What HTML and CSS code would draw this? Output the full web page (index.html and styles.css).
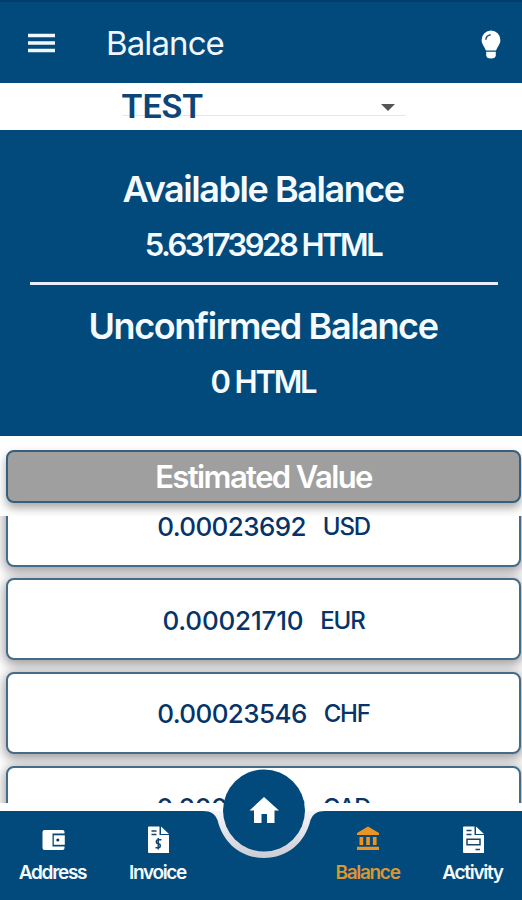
FILE: index.html
```html
<!DOCTYPE html>
<html lang="en">
<head>
    <meta charset="UTF-8">
    <meta name="viewport" content="width=device-width, initial-scale=1.0">
    <title>Balance</title>
    <link rel="stylesheet" href="styles.css">
</head>
<body>
    <div class="app">
        <header class="header">
            <svg class="menu-icon" width="27" height="20" viewBox="0 0 27 20">
                <path d="M0 .7h27v3.6H0zM0 8.2h27v3.6H0zM0 15.7h27v3.6H0z" fill="#f1f6ff"/>
            </svg>
            <h1>Balance</h1>
            <svg class="bulb-icon" width="20" height="29" viewBox="0 0 20 29">
                <path d="M10 .5a9.4 9.4 0 0 0-9.4 9.4c0 4 2.800 6.500 4.400 10.600h10c1.600-4.100 4.400-6.600 4.400-10.600A9.400 9.400 0 0 0 10 .5z" fill="#fff"/>
                <path d="M5.200 21.800h9.600v3.400c0 2-1.600 3.300-4.800 3.300s-4.800-1.300-4.800-3.300z" fill="#fff"/>
                <path d="M4.800 9.800c.2-2.600 2.200-4.600 4.900-5" fill="none" stroke="#34536b" stroke-width="1.500"/>
            </svg>
        </header>

        <div class="account">
            <div class="select">
                <span>TEST</span>
                <svg class="caret" width="14" height="7" viewBox="0 0 14 7"><path d="M0 0h14L7 7z" fill="#555"/></svg>
            </div>
        </div>

        <section class="balances">
            <h2 class="available">Available Balance</h2>
            <p class="available-amount">5.63173928 HTML</p>
            <div class="divider"></div>
            <h2 class="unconfirmed">Unconfirmed Balance</h2>
            <p class="unconfirmed-amount">0 HTML</p>
        </section>

        <div class="estimate">
            <div class="estimate-title">Estimated Value</div>
        </div>

        <div class="rates">
            <div class="rate"><span class="value">0.00023692</span><span class="currency">USD</span></div>
            <div class="rate"><span class="value eur">0.00021710</span><span class="currency">EUR</span></div>
            <div class="rate"><span class="value">0.00023546</span><span class="currency">CHF</span></div>
            <div class="rate"><span class="value">0.00035028</span><span class="currency">CAD</span></div>
        </div>

        <nav class="nav">
            <svg class="nav-shape" width="522" height="137" viewBox="0 0 522 137">
                <defs>
                    <linearGradient id="ring" x1="0" y1="0" x2="0" y2="1">
                        <stop offset="0" stop-color="#f6f6fa"/>
                        <stop offset="1" stop-color="#c9c9d2"/>
                    </linearGradient>
                </defs>
                <path d="M200 48h128v50H200z" fill="url(#ring)"/>
                <path d="M0 48h203C211 48 215 51 217.500 57C223 80 241 95 264 95S305 80 310.500 57C313 51 317 48 325 48h197v89H0z" fill="#024a7b"/>
                <circle cx="264" cy="47.500" r="41" fill="#024a7b"/>
                <path d="M264 34l15 13.500h-4.500V60H267v-9h-5.500v9H254V47.500h-4.500z" fill="#fff"/>
            </svg>
            <a class="nav-item">
                <svg width="24" height="28" viewBox="0 0 24 28">
                    <path d="M3.500 4h18q2 0 2 2v1.500H11.500v13h12V22q0 2-2 2h-18q-2 0-2-2V6q0-2 2-2z" fill="#fff"/>
                    <path d="M12.800 9.300h11v9.500h-11z" fill="#fff"/>
                    <circle cx="16.800" cy="14" r="1.500" fill="#063055"/>
                </svg>
                <span class="address">Address</span>
            </a>
            <a class="nav-item">
                <svg width="24" height="28" viewBox="0 0 24 28">
                    <path d="M3 .5h10.500V9H23v18H3q-1 0-1-1V1.500q0-1 1-1zM15 .5L23 8h-8z" fill="#fff"/>
                    <path d="M5.500 5h5M5.500 8.500h5M15.500 13.800h-3.200c-2.600 0-2.600 3.900 0 3.900s2.600 4 0 4H9.500M12.300 12v11.500" fill="none" stroke="#17466c" stroke-width="1.500"/>
                </svg>
                <span class="invoice">Invoice</span>
            </a>
            <span class="nav-gap"></span>
            <a class="nav-item active">
                <svg width="24" height="28" viewBox="0 0 24 28">
                    <path d="M12 .5L23 7v2H1V7zM3.500 11h3.700v8H3.500zM10.200 11h3.700v8h-3.700zM16.900 11h3.700v8h-3.700zM1 20.800h22V24H1z" fill="#ef9320"/>
                </svg>
                <span class="balance">Balance</span>
            </a>
            <a class="nav-item">
                <svg width="24" height="28" viewBox="0 0 24 28">
                    <path d="M3 .5h10.500V9H23v18H3q-1 0-1-1V1.500q0-1 1-1zM15 .5L23 8h-8z" fill="#fff"/>
                    <path d="M5.500 4.500h5M5.500 8.500h5M14.500 23.500h4.500M6 13.200h13v5.500H6z" fill="none" stroke="#17466c" stroke-width="1.500"/>
                </svg>
                <span class="activity">Activity</span>
            </a>
        </nav>
    </div>
</body>
</html>
```
FILE: styles.css
```css
* {
    margin: 0;
    padding: 0;
    box-sizing: border-box;
}

body {
    font-family: 'Inter', 'Open Sans', sans-serif;
    background: #fff;
}

.app {
    width: 522px;
    height: 900px;
    display: flex;
    flex-direction: column;
    overflow: hidden;
}

/* Header */
.header {
    height: 83px;
    padding: 0 21px 0 28px;
    display: flex;
    align-items: center;
    background: #024a7b;
    border-top: 2px solid #023e6d;
    flex-shrink: 0;
}

.header h1 {
    margin-left: 51px;
    font-size: 33px;
    font-weight: 400;
    line-height: 40px;
    letter-spacing: -0.9px;
    color: #eff6ff;
}

.bulb-icon {
    margin-left: auto;
    margin-top: 3px;
}

/* Account select */
.account {
    height: 47px;
    display: flex;
    justify-content: center;
    flex-shrink: 0;
}

.select {
    width: 284px;
    height: 33px;
    margin-left: 5px;
    padding-right: 11px;
    display: flex;
    justify-content: space-between;
    border-bottom: 1px solid #e6e6e6;
}

.select span {
    font-family: Roboto, sans-serif;
    font-size: 34px;
    font-weight: 600;
    line-height: 46px;
    color: #0c4577;
}

.caret {
    margin-top: 21px;
}

/* Balances */
.balances {
    height: 306px;
    padding: 37px 26px 0 30px;
    background: #024a7b;
    color: #f5faff;
    text-align: center;
    flex-shrink: 0;
}

.balances h2 {
    font-size: 36px;
    font-weight: 600;
    line-height: 44px;
    white-space: nowrap;
}

.balances p {
    margin-top: 15px;
    font-size: 31px;
    font-weight: 600;
    line-height: 38px;
}

.balances .available {
    letter-spacing: -1.45px;
}

.balances .available-amount {
    letter-spacing: -2.5px;
}

.balances .unconfirmed {
    letter-spacing: -1.4px;
}

.balances .unconfirmed-amount {
    letter-spacing: -2.2px;
}

.divider {
    height: 3px;
    margin: 18px -2px 19px 0;
    background: #e9edff;
}

/* Estimated value */
.estimate {
    height: 80px;
    padding: 14px 1px 0 6px;
    overflow: hidden;
    flex-shrink: 0;
}

.estimate-title {
    height: 53px;
    border: 2px solid #365f7d;
    border-radius: 8px;
    background: #9f9f9f;
    box-shadow: 0 5px 10px rgba(0, 0, 0, 0.35);
    font-size: 31px;
    font-weight: 600;
    line-height: 49px;
    letter-spacing: -1.6px;
    text-align: center;
    color: #fff;
}

.rates {
    height: 287px;
    padding: 0 1px 0 6px;
    overflow: hidden;
    flex-shrink: 0;
}

.rate {
    height: 82px;
    margin-bottom: 11.7px;
    padding-top: 2px;
    display: flex;
    align-items: center;
    justify-content: center;
    gap: 17px;
    border: 2px solid #426c87;
    border-radius: 8px;
    background: #fff;
    box-shadow: 0 3px 11px 2px rgba(20, 10, 20, 0.4);
    color: #063468;
}

.rate:first-child {
    margin-top: -31.5px;
}

.value {
    font-size: 26px;
    font-weight: 500;
    letter-spacing: -0.6px;
}

.value.eur {
    letter-spacing: -0.2px;
}

.currency {
    font-size: 24px;
    font-weight: 500;
    letter-spacing: -1.2px;
}

/* Bottom navigation */
.nav {
    position: relative;
    height: 97px;
    padding-top: 23px;
    display: grid;
    grid-template-columns: repeat(5, 105px);
    flex-shrink: 0;
}

/* the home button rises over the list */
.nav-shape {
    position: absolute;
    left: 0;
    bottom: 0;
}

.nav-item {
    position: relative;
    display: flex;
    flex-direction: column;
    align-items: center;
    color: #f5faff;
}

.nav-item span {
    margin-top: 7px;
    font-size: 19px;
    font-weight: 600;
    line-height: 24px;
    letter-spacing: -1.3px;
}

.nav-item.active {
    color: #dd952e;
}
```
